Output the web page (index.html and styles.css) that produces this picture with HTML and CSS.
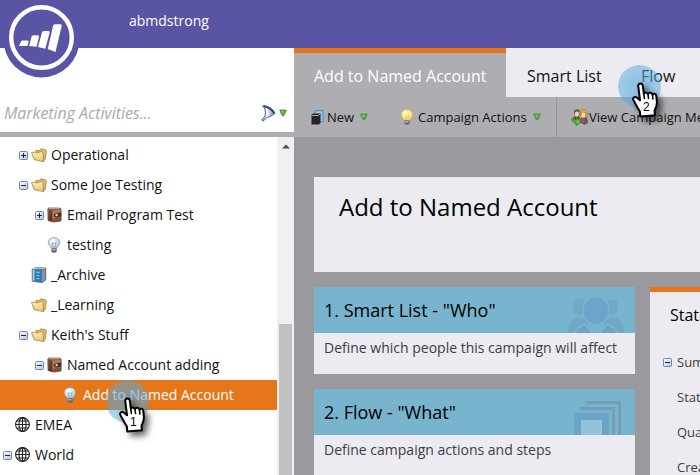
FILE: index.html
```html
<!DOCTYPE html>
<html lang="en">
<head>
<meta charset="utf-8">
<title>Marketing Activities</title>
<link rel="stylesheet" href="styles.css">
</head>
<body>
<svg class="defs" width="0" height="0" aria-hidden="true">
  <defs>
    <linearGradient id="gFold" x1="0" y1="0" x2="0" y2="1"><stop offset="0" stop-color="#fdf0c0"/><stop offset="1" stop-color="#ebc468"/></linearGradient>
    <linearGradient id="gTog" x1="0" y1="0" x2="1" y2="1"><stop offset="0" stop-color="#fff"/><stop offset="1" stop-color="#b4c4dc"/></linearGradient>
    <linearGradient id="gBrown" x1="0" y1="0" x2="1" y2="1"><stop offset="0" stop-color="#8a583c"/><stop offset="1" stop-color="#452618"/></linearGradient>
    <radialGradient id="gBulb" cx=".4" cy=".35" r=".7"><stop offset="0" stop-color="#fff"/><stop offset="1" stop-color="#a9c3d6"/></radialGradient>
    <radialGradient id="gLit" cx=".4" cy=".35" r=".7"><stop offset="0" stop-color="#fffde0"/><stop offset="1" stop-color="#f7d94a"/></radialGradient>
    <linearGradient id="gFun" x1="0" y1="0" x2="1" y2="0"><stop offset="0" stop-color="#8496ad"/><stop offset=".45" stop-color="#eef2f6"/><stop offset="1" stop-color="#5c6f8e"/></linearGradient>
    <symbol id="plus" viewBox="0 0 9 9"><rect x=".5" y=".5" width="8" height="8" rx="1" fill="url(#gTog)" stroke="#6d88ac"/><path d="M2 4.5h5M4.500 2v5" stroke="#16233f"/></symbol>
    <symbol id="minus" viewBox="0 0 9 9"><rect x=".5" y=".5" width="8" height="8" rx="1" fill="url(#gTog)" stroke="#6d88ac"/><path d="M2 4.500h5" stroke="#16233f"/></symbol>
    <symbol id="folder" viewBox="0 0 16 16">
      <path d="M5 5.500l.2-2.300 3.300.6 1.200-2 4.600.9 1.100 1.200-1.200 8.600-2.200 2.100z" fill="#e3bb63" stroke="#94743a" stroke-width=".7"/>
      <path d="M.5 5.500l3.800-.4 1.200 1 4.700-1.600 1.700.8.600 9.300-9.300-1.900z" fill="url(#gFold)" stroke="#94743a" stroke-width=".7" stroke-linejoin="round"/>
    </symbol>
    <symbol id="program" viewBox="0 0 16 16">
      <path d="M.8 1.800l1-.9 11.400.2.900 1v12l-7 1L1 13.500z" fill="#96664a" stroke="#54321f" stroke-width=".6"/>
      <path d="M1.200 2.200L5.500 4v11l-4.300-1.700z" fill="url(#gBrown)"/>
      <path d="M5.500 4l8.200-1.600v3.200l-4 .8-.5 1.800 5-1v5.600l-8.700 2z" fill="#a87a60"/>
      <path d="M7 7l7.200-1.800v4.300L9 10.800 7 9.500z" fill="#4e2d1e"/><path d="M5.500 12l8.500-1.700v3.500l-8.500 1.500z" fill="#7c5039"/><circle cx="9.600" cy="8.200" r="1.100" fill="#f3e8df"/>
      <path d="M2 1.500h10.500" stroke="#d5b39d" stroke-width=".7"/>
    </symbol>
    <symbol id="bulb" viewBox="0 0 16 16">
      <path d="M7 .5C3.400.5 1.200 2.900 1.200 5.700c0 2.400 2.300 3.300 2.900 5.500h5.800c.6-2.200 2.900-3.100 2.900-5.500C12.800 2.900 10.600.5 7 .5z" fill="url(#gBulb)" stroke="#8b9eac" stroke-width=".8"/>
      <path d="M5.200 5.500L6 10M8.800 5.500L8 10M5 5.500l1 1 1-1 1 1 1-1" stroke="#7b929f" stroke-width=".6" fill="none"/>
      <path d="M4.300 11.200h5.400v3L8.400 15.700H5.600L4.300 14.200z" fill="#666c76"/><path d="M4.500 12.800h4" stroke="#d5dae0" stroke-width=".8"/>
    </symbol>
    <symbol id="lit" viewBox="0 0 14 16">
      <path d="M7 .5C3.400.5 1.200 2.900 1.200 5.700c0 2.400 2.300 3.300 2.900 5.500h5.800c.6-2.200 2.900-3.100 2.900-5.500C12.800 2.900 10.600.5 7 .5z" fill="url(#gLit)" stroke="#d8b23c" stroke-width=".8"/>
      <path d="M5.500 6l.8 4M8.500 6l-.8 4" stroke="#d7ac37" stroke-width=".7"/>
      <path d="M4.300 11.200h5.400v3L8.400 15.700H5.600L4.300 14.200z" fill="#6c6f74"/><path d="M4.500 12.800h4" stroke="#e8e8e8" stroke-width=".8"/>
    </symbol>
    <symbol id="archive" viewBox="0 0 16 16">
      <path d="M1.200 2.200l4-1.700 9.600.5v12l-3.800 2.600-9.800-1.400z" fill="#5d7688" stroke="#445465" stroke-width=".7"/>
      <path d="M1.700 2.700l2 .2v11l-2-.4z" fill="#b8cad7"/><path d="M3.700 2.800l6.300.6v11.400l-6.300-.9z" fill="#1f7fc4"/>
      <path d="M5.500 4.500l3 .3v1.500l-3-.3zM5.500 8l3 .3v1l-3-.3zM5.500 11l3 .3v1l-3-.3z" fill="#88cef5"/>
      <path d="M11 3.600l3.300-2v11L11 15z" fill="#8595a1"/><path d="M2 2.100l4-1.100 7.500.4" stroke="#d5e0e8" fill="none"/>
    </symbol>
    <symbol id="globe" viewBox="0 0 16 16"><g fill="none" stroke="#222" stroke-width="1.100"><circle cx="7.500" cy="7.500" r="6.900"/><ellipse cx="7.500" cy="7.500" rx="3.500" ry="6.900"/><path d="M7.500.5v14M.5 7.500h14M1.700 4h11.600M1.700 11h11.600"/></g></symbol>
    <symbol id="down" viewBox="0 0 8 8"><path d="M.7 1h6.600L4.800 6.700H3.200z" fill="#4fb63c" stroke="#388a31" stroke-width=".8"/><path d="M2 2h3L3.500 4.500z" fill="#7dd35d"/></symbol>
    <symbol id="hand" viewBox="0 0 28 36">
      <path d="M9.500 1.500C7.700 1.500 7 3 7.300 4.500L9 18.200l-3.700-3c-1.700-1-4 .8-3 2.700l4 7.300 2.500 4 .5 5.300L24 33.300l-.5-4.500c1.600-2.800 2.600-5.800 2.400-9l-.7-6.300c-.4-2.100-3.100-2.200-3.800-.8-.4-2.100-3.400-2.600-4.500-.7-.7-1.600-3.100-1.900-4.100-.4L11.900 4C11.700 2.300 10.800 1.500 9.500 1.500z" fill="#fff" stroke="#000" stroke-width="2" stroke-linejoin="round"/>
      <path d="M12.800 11.500l.6 5M17 12.300l.5 4.200M21.500 13l.4 4" stroke="#000" stroke-width="1.600" stroke-linecap="round"/>
    </symbol>
  </defs>
</svg>
<div class="app">
  <header class="top">
    <span class="account">abmdstrong</span>
    <svg class="logo" viewBox="0 0 78 78">
      <circle cx="39.500" cy="39.500" r="38" fill="#5a54a4"/><circle cx="39.500" cy="37.500" r="30.300" fill="none" stroke="#fff" stroke-width="4.400"/>
      <g fill="#fff"><path d="M19 41.500q.4-1 1.500-1h5q1.300 0 1 1.200l-1 4.300H17z"/><path d="M29.500 36.700q.4-1.500 1.900-1.500h4.400q1.500 0 1.200 1.500l-2.500 10-7.400-.8z"/><path d="M40 32.500q.4-1.500 1.900-1.500h4.600q1.500 0 1.200 1.500l-4.400 16.200-7.400-1.700z"/><path d="M51 26q.5-1.700 2-1.700h5.500q1.500 0 1.200 1.600l-6.200 26-7.700-3z"/></g>
    </svg>
  </header>
  <div class="body">
    <aside class="side">
      <div class="search"><span class="hint">Marketing Activities...</span>
        <svg class="funnel" viewBox="0 0 15 17"><path d="M1.500.8Q4 3 4.500 7L4 11 .8 15l1.200 1.200L6 12.500Q10 12 14 8.300 11 2 4.500.8z" fill="url(#gFun)" stroke="#3a4a68" stroke-width=".8"/><path d="M3 1.200Q9.500 3 13.300 8" fill="none" stroke="#283b61" stroke-width="1.700"/><path d="M5 4q2 3 1 7" fill="none" stroke="#fff" stroke-width="1.200"/></svg>
        <svg class="down"><use href="#down"/></svg>
      </div>
      <div class="treewrap">
        <ul class="tree">
          <li class="l1"><svg class="tog"><use href="#plus"/></svg><svg class="ic"><use href="#folder"/></svg><span>Operational</span></li>
          <li class="l1"><svg class="tog"><use href="#minus"/></svg><svg class="ic"><use href="#folder"/></svg><span>Some Joe Testing</span></li>
          <li class="l2"><svg class="tog"><use href="#plus"/></svg><svg class="ic"><use href="#program"/></svg><span>Email Program Test</span></li>
          <li class="l2"><i class="tog"></i><svg class="ic"><use href="#bulb"/></svg><span>testing</span></li>
          <li class="l1"><i class="tog"></i><svg class="ic"><use href="#archive"/></svg><span>_Archive</span></li>
          <li class="l1"><i class="tog"></i><svg class="ic"><use href="#folder"/></svg><span>_Learning</span></li>
          <li class="l1"><svg class="tog"><use href="#minus"/></svg><svg class="ic"><use href="#folder"/></svg><span>Keith's Stuff</span></li>
          <li class="l2"><svg class="tog"><use href="#minus"/></svg><svg class="ic"><use href="#program"/></svg><span>Named Account adding</span></li>
          <li class="l3 selected"><i class="tog"></i><svg class="ic"><use href="#bulb"/></svg><span>Add to Named Account</span></li>
          <li class="l0"><i class="tog"></i><svg class="ic"><use href="#globe"/></svg><span>EMEA</span></li>
          <li class="l0"><svg class="tog"><use href="#minus"/></svg><svg class="ic"><use href="#globe"/></svg><span>World</span></li>
        </ul>
        <div class="scroll"><svg viewBox="0 0 8 5"><path d="M0 4.500L4 .5l4 4z" fill="#505050"/></svg><div class="thumb"></div></div>
      </div>
    </aside>
    <section class="content">
      <nav class="tabs"><span class="tab active">Add to Named Account</span><span class="tab smart">Smart List</span><span class="tab flow">Flow</span></nav>
      <div class="toolbar">
        <div class="tool new">
          <svg class="newic" viewBox="0 0 13 15"><path d="M4 3V1.500L5.500.7H12v11H9" fill="#a3c2d8" stroke="#3e9bdc" stroke-width="1.200"/><path d="M.5 5L2 3.500h7.500V13L8 14.500H.5z" fill="#252525"/><path d="M1.200 5.500h6.300L9 4" fill="none" stroke="#bbb" stroke-width=".9"/></svg>
          <span>New</span><svg class="down"><use href="#down"/></svg>
        </div>
        <div class="tool actions"><svg class="lit"><use href="#lit"/></svg><span>Campaign Actions</span><svg class="down"><use href="#down"/></svg></div>
        <div class="tool view">
          <svg class="people" viewBox="0 0 17 17"><path d="M9.500 9.500l6-.5 1 2v3l-3 1.500-4-2z" fill="#c3423a" stroke="#6d2a25" stroke-width=".5"/><path d="M13 10l3 .5v3.500l-3 1.300z" fill="#3867a8"/><path d="M1.500 9l2-1.500h5L9 10l-4 2z" fill="#8b3b31"/><ellipse cx="5.800" cy="4.800" rx="2.500" ry="3.300" fill="#f3d9b1" stroke="#65462c" stroke-width=".6"/><path d="M3 5V2l2-1.400h3L9 2.500 5.500 2.600 4 3.500z" fill="#6b4e2f"/><ellipse cx="12.300" cy="5.300" rx="2.800" ry="3.700" fill="#f6dcb0" stroke="#906b32" stroke-width=".6"/><path d="M9.300 7V2.500L11 .7h3.500L16.300 3v6l-1.500-.5V4l-3.400-1z" fill="#dfaa3c" stroke="#86602a" stroke-width=".4"/><path d="M.7 9.500q1 2 4.300 1.700V8.500l5.500 4.300-5.500 3.700v-2.500Q1 14 .7 9.500z" fill="#4bcd40" stroke="#16791d" stroke-width=".8"/></svg>
          <span>View Campaign Members</span>
        </div>
      </div>
      <main class="main">
        <h1>Add to Named Account</h1>
        <div class="cols">
          <div class="steps">
            <article class="card">
              <h2>1. Smart List - "Who"<svg class="deco" viewBox="0 0 56 37"><g fill="#73a9c3"><rect x="5" y="3" width="14" height="16" rx="6"/><rect x="36" y="3" width="14" height="16" rx="6"/><path d="M0 37q-1-9 7-16 4 2 8 1l7 5-8 10zM56 37q1-9-7-16-4 2-8 1l-7 5 8 10z"/></g><g fill="#6ca5c9" stroke="#7ab4ce" stroke-width="1.500"><ellipse cx="28" cy="14.500" rx="13" ry="14"/><path d="M6 38q4-7 10-10 5 5 10 10zM50 38q-4-7-10-10-5 5-10 10z"/></g></svg></h2>
              <p>Define which people this campaign will affect</p>
            </article>
            <article class="card">
              <h2>2. Flow - "What"<svg class="deco" viewBox="0 0 56 37"><path d="M18 4.500h33.500V37M12 10.500h33.500V37" fill="none" stroke="#719fb5" stroke-width="3"/><path d="M6 15h35v22H6z" fill="#6aa4c8"/><path d="M13 22h21v15H13z" fill="#94c2d7"/></svg></h2>
              <p>Define campaign actions and steps</p>
            </article>
          </div>
          <section class="stats"><h3>Status</h3><div class="stat head"><svg class="tog"><use href="#minus"/></svg><span>Summary</span></div><div class="stat">Status</div><div class="stat">Qualification</div><div class="stat">Created</div></section>
        </div>
      </main>
    </section>
  </div>
  <div class="pointer first"><svg viewBox="0 0 28 36"><use href="#hand"/></svg><b>1</b></div>
  <div class="pointer second"><svg viewBox="0 0 28 36"><use href="#hand"/></svg><b>2</b></div>
</div>
</body>
</html>
```
FILE: styles.css
```css
* { box-sizing: border-box; }
body { margin: 0; font-family: "Open Sans", sans-serif; font-size: 14px; color: #111; }
.defs { position: absolute; }
svg { display: block; flex: none; }
span { white-space: nowrap; }
.app { position: relative; width: 700px; height: 475px; overflow: hidden; display: flex; flex-direction: column; }
.top { position: relative; height: 48px; flex: none; background: #5a54a4; color: #fff; padding: 11px 0 0 129px; line-height: 20px; }
.logo { position: absolute; left: 2px; top: 0; width: 78px; height: 78px; z-index: 2; }
.body { display: flex; flex: 1; min-height: 0; }
.side { width: 294px; flex: none; display: flex; flex-direction: column; background: #fff; }
.search { height: 89px; flex: none; border-bottom: 5px solid #aeadb2; display: flex; align-items: flex-end; padding: 0 7px 9px 4px; }
.hint { flex: 1; font-size: 16px; font-style: italic; line-height: 22px; color: #aaa; position: relative; top: 1px; letter-spacing: -.05px; }
.funnel { width: 15px; height: 17px; margin: 0 3px 1px 0; }
.down { width: 8px; height: 8px; }
.search .down { margin-bottom: 6px; }
.treewrap { display: flex; flex: 1; min-height: 0; }
.tree { list-style: none; margin: 0; padding: 3px 0 0; width: 277px; flex: none; }
.tree li { height: 30px; display: flex; align-items: center; padding-left: 3px; line-height: 20px; }
.tree .l1 { padding-left: 19px; }
.tree .l2 { padding-left: 35px; }
.tree .l3 { padding-left: 51px; }
.tree .selected { background: #e7761b; color: #fff; }
.tog { width: 9px; height: 9px; flex: none; }
.ic { width: 16px; height: 16px; margin: 0 4px 0 3px; }
.scroll { width: 17px; background: #f0f0f0; padding: 7px 2px 0; display: flex; flex-direction: column; align-items: center; }
.scroll svg { width: 8px; height: 5px; }
.thumb { width: 13px; flex: 1; margin-top: 175px; background: #c1c1c1; }
.content { width: 406px; display: flex; flex-direction: column; background: #9a999e; }
.tabs { height: 49px; flex: none; display: flex; background: #ecebf1; font-size: 16px; line-height: 22px; }
.tab { padding-top: 17px; }
.active { width: 212px; border-top: 5px solid #e7761b; padding: 12px 0 0 20px; background: #aeadb2; color: #fff; }
.smart { width: 114px; padding-left: 21px; }
.flow { padding-left: 21px; }
.toolbar { height: 40px; flex: none; display: flex; background: #aeadb2; font-size: 13px; overflow: hidden; }
.tool { display: flex; align-items: center; flex: none; }
.new { width: 106px; padding-left: 17px; }
.newic { width: 13px; height: 15px; margin-right: 3px; }
.tool .down { margin-left: 6px; }
.actions { width: 156px; }
.lit { width: 14px; height: 16px; margin-right: 4px; }
.view { border-left: 1px solid #98979c; padding-left: 14px; }
.people { width: 17px; height: 17px; margin-right: 1px; }
.main { flex: 1; padding: 40px 0 0 20px; overflow: hidden; display: flex; flex-direction: column; }
h1, h2, h3, p { margin: 0; font-weight: 400; }
h1 { height: 95px; flex: none; background: #ecebf1; padding: 13px 0 0 25px; font-size: 24px; line-height: 34px; color: #000; }
.cols { display: flex; gap: 15px; margin-top: 15px; }
.steps { width: 321px; flex: none; display: flex; flex-direction: column; gap: 15px; }
.card { height: 87px; background: #ecebf1; }
h2 { height: 46px; background: #79b4ce; padding: 0 11px 0 10px; font-size: 18px; display: flex; justify-content: space-between; align-items: center; color: #000; }
.deco { width: 56px; height: 37px; align-self: flex-end; }
.card p { padding: 5px 10px; line-height: 20px; color: #3d3d40; white-space: nowrap; }
.stats { flex: none; width: 160px; height: 200px; background: #ecebf1; border-top: 5px solid #e7761b; font-size: 13px; color: #3d3d40; }
h3 { font-size: 16px; line-height: 22px; padding: 12px 0 0 20px; height: 53px; color: #000; }
.stat { height: 35px; line-height: 35px; padding-left: 27px; }
.head { display: flex; align-items: center; gap: 5px; padding-left: 13px; }
.pointer { position: absolute; width: 43px; height: 43px; border-radius: 50%; background: radial-gradient(circle, rgba(84,169,220,.6) 0 28%, rgba(84,169,220,.48) 72%); }
.first { left: 106px; top: 380px; }
.second { left: 618px; top: 65px; }
.pointer svg { position: absolute; left: 12px; top: 17px; width: 28px; height: 36px; filter: drop-shadow(4px 4px 3px rgba(0,0,0,.6)); }
.second svg { left: 13px; }
.pointer b { position: absolute; left: 24px; top: 35px; font: 12px/14px "Liberation Sans", sans-serif; color: #000; }
.second b { left: 25px; }
```
